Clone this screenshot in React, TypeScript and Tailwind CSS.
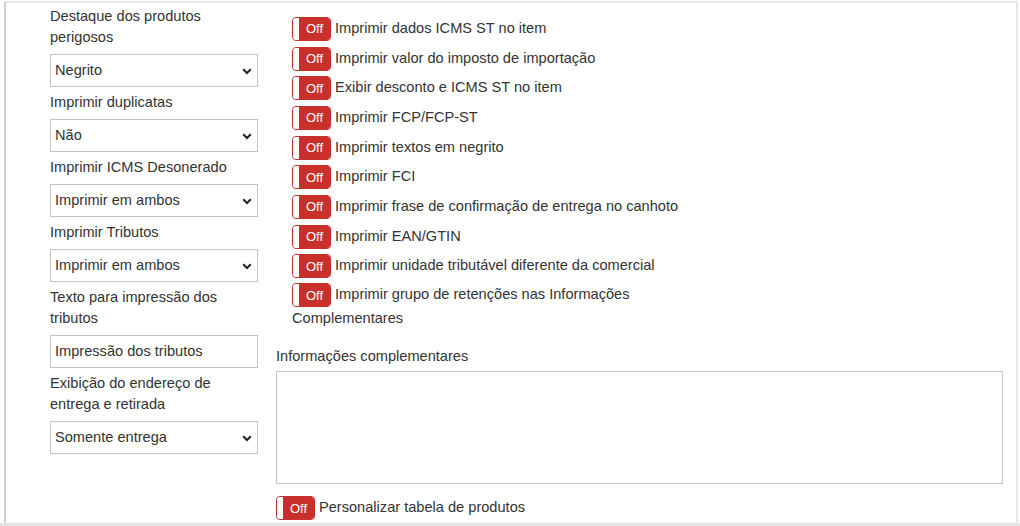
const leftFields = [
  { label: 'Destaque dos produtos perigosos', value: 'Negrito', select: true },
  { label: 'Imprimir duplicatas', value: 'Não', select: true },
  { label: 'Imprimir ICMS Desonerado', value: 'Imprimir em ambos', select: true },
  { label: 'Imprimir Tributos', value: 'Imprimir em ambos', select: true },
  { label: 'Texto para impressão dos tributos', value: 'Impressão dos tributos', select: false },
  { label: 'Exibição do endereço de entrega e retirada', value: 'Somente entrega', select: true },
]

const toggles = [
  'Imprimir dados ICMS ST no item',
  'Imprimir valor do imposto de importação',
  'Exibir desconto e ICMS ST no item',
  'Imprimir FCP/FCP-ST',
  'Imprimir textos em negrito',
  'Imprimir FCI',
  'Imprimir frase de confirmação de entrega no canhoto',
  'Imprimir EAN/GTIN',
  'Imprimir unidade tributável diferente da comercial',
]

const Toggle = () => (
  <span className="inline-flex h-[24px] w-[39px] overflow-hidden rounded-[4px] border border-[#c9302c] align-middle">
    <span className="w-[6px] rounded-l-[3px] bg-white" />
    <span className="flex flex-1 items-center justify-center bg-[#c9302c] text-[13px] leading-none text-white">
      Off
    </span>
  </span>
)

const Chevron = () => (
  <svg width="10" height="7" viewBox="0 0 10 7" className="absolute right-[5px] top-[13px]">
    <path d="M1.2 1.2 L5 5 L8.8 1.2" fill="none" stroke="#222" strokeWidth="2" />
  </svg>
)

export default function App() {
  return (
    <div
      className="h-[526px] w-[1020px] overflow-hidden bg-white text-[14.6px] text-[#333]"
      style={{ fontFamily: '"Liberation Sans", Arial, sans-serif' }}
    >
      <div className="ml-[4px] mt-[1px] flex h-[522px] w-[1014px] border-l-2 border-r-2 border-t-2 border-l-[#d2d2d2] border-r-[#e6e6e6] border-t-[#e6e6e6]">
        <div className="ml-[44px] flex w-[208px] flex-col pt-[2px]">
          {leftFields.map((f, i) => (
            <div key={i} className="flex flex-col">
              <label className="mt-[1px] leading-[21px]">{f.label}</label>
              <div className="relative mb-[4px] mt-[6px] flex h-[33px] items-center border border-[#c4c4c4] pl-[4px]">
                <span>{f.value}</span>
                {f.select && <Chevron />}
              </div>
            </div>
          ))}
        </div>
        <div className="ml-[18px] mr-[13px] flex flex-1 flex-col pt-[11px]">
          <div className="pl-[16px]">
            {toggles.map((t, i) => (
              <div key={i} className="flex h-[29.7px] items-center">
                <Toggle />
                <span className="ml-[4px]">{t}</span>
              </div>
            ))}
            <div className="mt-[2px] leading-[23px]">
              <Toggle /> Imprimir grupo de retenções nas Informações
              <br />
              Complementares
            </div>
          </div>
          <label className="mt-[16px] leading-[21px]">Informações complementares</label>
          <textarea className="mt-[4px] h-[113px] w-[727px] resize-none border border-[#c4c4c4]" />
          <div className="mt-[12px] flex items-center">
            <Toggle />
            <span className="ml-[4px]">Personalizar tabela de produtos</span>
          </div>
        </div>
      </div>
      <div className="h-[3px] w-full bg-[#e6e6e6]" />
    </div>
  )
}
